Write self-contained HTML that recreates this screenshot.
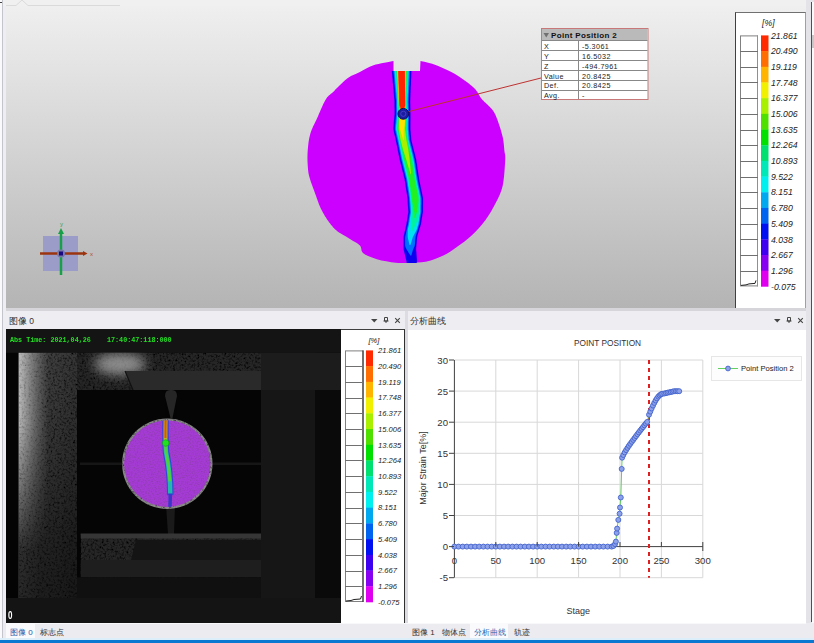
<!DOCTYPE html>
<html><head><meta charset="utf-8">
<style>
*{margin:0;padding:0;box-sizing:border-box}
html,body{width:814px;height:643px;overflow:hidden;background:#eeeef2;font-family:"Liberation Sans",sans-serif}
.a{position:absolute}
#top{left:6px;top:6px;width:800px;height:302px;background:linear-gradient(#efefef,#d2d2d2 50%,#b4b4b4)}
.hdr{font-size:8.5px;color:#333}
.tab{font-size:8px;color:#333;top:627px}
</style></head><body>
<!-- left edge -->
<div class="a" style="left:0;top:0;width:2px;height:643px;background:#fafafc"></div>
<div class="a" style="left:2px;top:0;width:1px;height:643px;background:#c4c4cc"></div>
<!-- top 3D view -->
<div class="a" style="left:3px;top:0;width:803px;height:6px;background:#f0f0f0"></div>
<div id="top" class="a"></div>
<svg class="a" style="left:0;top:0" width="120" height="10"><path d="M6,5.5 L16,5.5 L22,0 L28,5.5 L120,5.5" fill="none" stroke="#dadada" stroke-width="1"/><rect x="0" y="2" width="2" height="1" fill="#444"/></svg>
<!-- right edge -->
<div class="a" style="left:806px;top:0;width:8px;height:643px;background:#e4e4e8"></div>
<div class="a" style="left:811px;top:2px;width:1px;height:620px;background:#505050"></div>
<div class="a" style="left:812px;top:2px;width:2px;height:637px;background:#fafafa"></div>
<div class="a" style="left:812px;top:35px;width:2px;height:13px;background:#c8c8c8"></div>

<!-- 3D view content svg -->
<svg class="a" style="left:0;top:0" width="814" height="310">
  <defs><filter id="cb" x="-20%" y="-5%" width="140%" height="110%"><feGaussianBlur stdDeviation="0.7"/></filter></defs>
  <!-- circle -->
  <path fill="#cc00ff" d="M393.5,71 L393.5,61 C390.2,61.7 379.2,63.4 373.6,65.3 C368.0,67.1 364.2,70.0 359.9,72.1 C355.6,74.2 352.2,75.0 347.9,78.1 C343.6,81.2 337.9,87.3 334.2,90.9 C330.5,94.5 328.5,94.9 325.7,99.5 C322.9,104.1 319.7,112.6 317.1,118.3 C314.5,124.0 311.9,128.3 310.3,133.7 C308.7,139.1 308.1,145.6 307.7,150.8 C307.3,156.0 307.4,160.6 307.7,165 C308.0,169.4 308.1,172.2 309.4,177.1 C310.7,182.0 313.3,188.5 315.4,194.2 C317.5,199.9 319.1,205.6 322.2,211.3 C325.3,217.0 329.6,223.8 334.2,228.4 C338.8,233.0 345.3,235.8 349.6,238.7 C353.9,241.5 357.6,243.1 359.9,245.5 C362.2,247.9 360.4,250.9 363.3,253.2 C366.2,255.5 371.6,257.6 377,259.2 C382.4,260.8 390.3,262.1 395.8,262.7 C401.3,263.3 405.0,262.8 410,262.7 C415.0,262.6 420.2,262.9 425.7,261.8 C431.2,260.7 437.7,258.2 442.8,255.8 C447.9,253.4 451.6,250.7 456.5,247.3 C461.4,243.9 467.1,239.9 471.9,235.3 C476.7,230.7 481.5,225.3 485.5,219.9 C489.5,214.5 492.9,208.5 495.8,202.8 C498.7,197.1 501.1,192.8 502.7,185.7 C504.3,178.6 504.9,165.8 505.2,160 C505.5,154.2 504.8,154.6 504.4,150.8 C504.0,147.0 503.8,142.2 502.7,137.1 C501.6,132.0 499.2,124.6 497.5,120 C495.8,115.4 495.0,113.1 492.4,109.7 C489.8,106.3 485.0,102.9 482.1,99.5 C479.2,96.1 478.2,92.3 475.3,89.2 C472.4,86.1 469.0,83.6 465,80.7 C461.0,77.8 456.4,74.8 451.3,72.1 C446.2,69.4 439.3,66.2 434.2,64.4 C429.1,62.6 422.8,61.6 420.5,61 L420,71 Z"/>
  <g filter="url(#cb)"><path fill="#1000f0" d="M391.8,71.0 L391.9,72.5 L392.1,74.0 L392.2,75.5 L392.3,77.0 L392.5,78.5 L392.6,80.0 L392.7,81.5 L392.8,83.0 L393.0,84.5 L393.1,86.0 L393.2,87.5 L393.4,89.0 L393.5,90.5 L393.6,92.0 L393.8,93.5 L393.9,95.0 L394.0,96.5 L394.1,98.0 L394.3,99.5 L394.4,101.0 L394.4,102.5 L394.4,104.0 L394.4,105.5 L394.4,107.0 L394.5,108.5 L394.5,110.0 L394.5,111.5 L394.5,113.0 L394.5,114.5 L394.3,116.0 L394.2,117.5 L394.1,119.0 L393.9,120.5 L393.8,122.0 L393.7,123.5 L393.5,125.0 L393.4,126.5 L393.3,128.0 L393.3,129.5 L393.7,131.0 L394.0,132.5 L394.3,134.0 L394.7,135.5 L395.0,137.0 L395.4,138.5 L395.7,140.0 L396.0,141.5 L396.3,143.0 L396.6,144.5 L396.9,146.0 L397.2,147.5 L397.5,149.0 L397.8,150.5 L398.1,152.0 L398.4,153.5 L398.7,155.0 L399.0,156.5 L399.3,158.0 L399.6,159.5 L400.0,161.0 L400.4,162.5 L400.7,164.0 L401.1,165.5 L401.5,167.0 L401.9,168.5 L402.2,170.0 L402.6,171.5 L403.0,173.0 L403.4,174.5 L403.7,176.0 L404.1,177.5 L404.5,179.0 L404.7,180.5 L405.0,182.0 L405.2,183.5 L405.4,185.0 L405.6,186.5 L405.9,188.0 L406.1,189.5 L406.3,191.0 L406.6,192.5 L406.8,194.0 L407.0,195.5 L407.2,197.0 L407.4,198.5 L407.5,200.0 L407.6,201.5 L407.7,203.0 L407.8,204.5 L407.9,206.0 L408.0,207.5 L408.1,209.0 L408.2,210.5 L408.3,212.0 L408.1,213.5 L407.8,215.0 L407.6,216.5 L407.3,218.0 L407.1,219.5 L406.9,221.0 L406.6,222.5 L406.4,224.0 L406.1,225.5 L405.7,227.0 L405.4,228.5 L405.1,230.0 L404.7,231.5 L404.4,233.0 L404.1,234.5 L403.7,236.0 L403.5,237.5 L403.5,239.0 L403.5,240.5 L403.5,242.0 L403.5,243.5 L403.5,245.0 L403.5,246.5 L403.5,248.0 L403.6,249.5 L404.0,251.0 L404.3,252.5 L404.7,254.0 L405.1,255.5 L405.4,257.0 L405.8,258.5 L406.2,260.0 L406.5,261.5 L406.7,263.0 L416.7,263.0 L416.9,261.5 L416.9,260.0 L416.8,258.5 L416.7,257.0 L416.6,255.5 L416.5,254.0 L416.4,252.5 L416.2,251.0 L416.1,249.5 L416.2,248.0 L416.3,246.5 L416.4,245.0 L416.6,243.5 L416.7,242.0 L416.8,240.5 L416.9,239.0 L417.1,237.5 L417.4,236.0 L417.8,234.5 L418.3,233.0 L418.8,231.5 L419.2,230.0 L419.6,228.5 L420.1,227.0 L420.6,225.5 L421.0,224.0 L421.2,222.5 L421.5,221.0 L421.7,219.5 L421.9,218.0 L422.2,216.5 L422.4,215.0 L422.7,213.5 L422.9,212.0 L422.9,210.5 L422.9,209.0 L422.9,207.5 L422.9,206.0 L423.0,204.5 L423.0,203.0 L423.0,201.5 L423.0,200.0 L423.0,198.5 L422.8,197.0 L422.5,195.5 L422.2,194.0 L421.9,192.5 L421.6,191.0 L421.3,189.5 L420.9,188.0 L420.6,186.5 L420.3,185.0 L420.0,183.5 L419.7,182.0 L419.4,180.5 L419.1,179.0 L418.9,177.5 L418.7,176.0 L418.4,174.5 L418.2,173.0 L418.0,171.5 L417.8,170.0 L417.5,168.5 L417.3,167.0 L417.1,165.5 L416.9,164.0 L416.6,162.5 L416.4,161.0 L416.2,159.5 L415.8,158.0 L415.4,156.5 L415.1,155.0 L414.7,153.5 L414.3,152.0 L413.9,150.5 L413.6,149.0 L413.2,147.5 L412.8,146.0 L412.4,144.5 L412.1,143.0 L411.7,141.5 L411.3,140.0 L411.2,138.5 L411.1,137.0 L410.9,135.5 L410.8,134.0 L410.7,132.5 L410.6,131.0 L410.4,129.5 L410.4,128.0 L410.4,126.5 L410.4,125.0 L410.4,123.5 L410.4,122.0 L410.5,120.5 L410.5,119.0 L410.5,117.5 L410.5,116.0 L410.5,114.5 L410.5,113.0 L410.4,111.5 L410.4,110.0 L410.4,108.5 L410.3,107.0 L410.3,105.5 L410.3,104.0 L410.2,102.5 L410.2,101.0 L410.3,99.5 L410.3,98.0 L410.4,96.5 L410.4,95.0 L410.5,93.5 L410.6,92.0 L410.6,90.5 L410.7,89.0 L410.7,87.5 L410.8,86.0 L410.9,84.5 L410.9,83.0 L411.0,81.5 L411.0,80.0 L411.1,78.5 L411.2,77.0 L411.2,75.5 L411.3,74.0 L411.3,72.5 L411.4,71.0Z"/><path fill="#0070ff" d="M393.4,71.0 L393.5,72.5 L393.7,74.0 L393.8,75.5 L393.9,77.0 L394.1,78.5 L394.2,80.0 L394.3,81.5 L394.4,83.0 L394.6,84.5 L394.7,86.0 L394.8,87.5 L395.0,89.0 L395.1,90.5 L395.2,92.0 L395.4,93.5 L395.5,95.0 L395.6,96.5 L395.7,98.0 L395.9,99.5 L396.0,101.0 L396.0,102.5 L396.0,104.0 L396.0,105.5 L396.0,107.0 L396.1,108.5 L396.1,110.0 L396.1,111.5 L396.1,113.0 L396.1,114.5 L395.9,116.0 L395.8,117.5 L395.7,119.0 L395.5,120.5 L395.4,122.0 L395.3,123.5 L395.1,125.0 L395.0,126.5 L394.9,128.0 L394.9,129.5 L395.3,131.0 L395.6,132.5 L395.9,134.0 L396.3,135.5 L396.6,137.0 L397.0,138.5 L397.3,140.0 L397.6,141.5 L397.9,143.0 L398.2,144.5 L398.5,146.0 L398.8,147.5 L399.1,149.0 L399.4,150.5 L399.7,152.0 L400.0,153.5 L400.3,155.0 L400.6,156.5 L400.9,158.0 L401.2,159.5 L401.6,161.0 L402.0,162.5 L402.3,164.0 L402.7,165.5 L403.1,167.0 L403.5,168.5 L403.8,170.0 L404.2,171.5 L404.6,173.0 L405.0,174.5 L405.3,176.0 L405.7,177.5 L406.1,179.0 L406.3,180.5 L406.6,182.0 L406.8,183.5 L407.0,185.0 L407.2,186.5 L407.5,188.0 L407.7,189.5 L407.9,191.0 L408.2,192.5 L408.4,194.0 L408.6,195.5 L408.8,197.0 L409.0,198.5 L409.1,200.0 L409.2,201.5 L409.3,203.0 L409.4,204.5 L409.5,206.0 L409.6,207.5 L409.7,209.0 L409.8,210.5 L409.9,212.0 L409.7,213.5 L409.4,215.0 L409.2,216.5 L408.9,218.0 L408.7,219.5 L408.5,221.0 L408.2,222.5 L408.0,224.0 L407.7,225.5 L407.3,227.0 L407.0,228.5 L406.7,230.0 L406.3,231.5 L406.0,233.0 L405.7,234.5 L405.3,236.0 L405.1,237.5 L405.1,239.0 L405.1,240.5 L405.1,242.0 L405.1,243.5 L405.1,245.0 L405.3,246.5 L405.9,248.0 L406.7,249.5 L407.6,251.0 L408.5,252.5 L409.5,254.0 L410.4,255.5 L411.3,255.5 L411.7,254.0 L412.2,252.5 L412.6,251.0 L413.1,249.5 L413.7,248.0 L414.5,246.5 L414.8,245.0 L415.0,243.5 L415.1,242.0 L415.2,240.5 L415.3,239.0 L415.5,237.5 L415.8,236.0 L416.2,234.5 L416.7,233.0 L417.1,231.5 L417.6,230.0 L418.1,228.5 L418.5,227.0 L418.9,225.5 L419.4,224.0 L419.6,222.5 L419.9,221.0 L420.1,219.5 L420.3,218.0 L420.6,216.5 L420.8,215.0 L421.1,213.5 L421.3,212.0 L421.3,210.5 L421.3,209.0 L421.3,207.5 L421.3,206.0 L421.4,204.5 L421.4,203.0 L421.4,201.5 L421.4,200.0 L421.4,198.5 L421.2,197.0 L420.9,195.5 L420.6,194.0 L420.3,192.5 L420.0,191.0 L419.7,189.5 L419.3,188.0 L419.0,186.5 L418.7,185.0 L418.4,183.5 L418.1,182.0 L417.8,180.5 L417.5,179.0 L417.3,177.5 L417.1,176.0 L416.8,174.5 L416.6,173.0 L416.4,171.5 L416.2,170.0 L415.9,168.5 L415.7,167.0 L415.5,165.5 L415.3,164.0 L415.0,162.5 L414.8,161.0 L414.6,159.5 L414.2,158.0 L413.8,156.5 L413.5,155.0 L413.1,153.5 L412.7,152.0 L412.3,150.5 L412.0,149.0 L411.6,147.5 L411.2,146.0 L410.8,144.5 L410.5,143.0 L410.1,141.5 L409.7,140.0 L409.6,138.5 L409.5,137.0 L409.3,135.5 L409.2,134.0 L409.1,132.5 L409.0,131.0 L408.8,129.5 L408.8,128.0 L408.8,126.5 L408.8,125.0 L408.8,123.5 L408.8,122.0 L408.9,120.5 L408.9,119.0 L408.9,117.5 L408.9,116.0 L408.9,114.5 L408.9,113.0 L408.8,111.5 L408.8,110.0 L408.8,108.5 L408.7,107.0 L408.7,105.5 L408.7,104.0 L408.6,102.5 L408.6,101.0 L408.7,99.5 L408.7,98.0 L408.8,96.5 L408.8,95.0 L408.9,93.5 L409.0,92.0 L409.0,90.5 L409.1,89.0 L409.1,87.5 L409.2,86.0 L409.3,84.5 L409.3,83.0 L409.4,81.5 L409.4,80.0 L409.5,78.5 L409.6,77.0 L409.6,75.5 L409.7,74.0 L409.7,72.5 L409.8,71.0Z"/><path fill="#00e0f0" d="M394.4,71.0 L394.5,72.5 L394.7,74.0 L394.8,75.5 L394.9,77.0 L395.1,78.5 L395.2,80.0 L395.3,81.5 L395.4,83.0 L395.6,84.5 L395.7,86.0 L395.8,87.5 L396.0,89.0 L396.1,90.5 L396.2,92.0 L396.4,93.5 L396.5,95.0 L396.6,96.5 L396.7,98.0 L396.9,99.5 L397.0,101.0 L397.0,102.5 L397.0,104.0 L397.0,105.5 L397.0,107.0 L397.1,108.5 L397.1,110.0 L397.1,111.5 L397.1,113.0 L397.1,114.5 L396.9,116.0 L396.8,117.5 L396.7,119.0 L396.5,120.5 L396.4,122.0 L396.3,123.5 L396.1,125.0 L396.0,126.5 L395.9,128.0 L395.9,129.5 L396.3,131.0 L396.6,132.5 L396.9,134.0 L397.3,135.5 L397.6,137.0 L398.0,138.5 L398.3,140.0 L398.6,141.5 L398.9,143.0 L399.2,144.5 L399.5,146.0 L399.8,147.5 L400.1,149.0 L400.4,150.5 L400.7,152.0 L401.0,153.5 L401.3,155.0 L401.6,156.5 L401.9,158.0 L402.2,159.5 L402.6,161.0 L403.0,162.5 L403.3,164.0 L403.7,165.5 L404.1,167.0 L404.5,168.5 L404.8,170.0 L405.2,171.5 L405.6,173.0 L406.0,174.5 L406.3,176.0 L406.7,177.5 L407.1,179.0 L407.3,180.5 L407.6,182.0 L407.8,183.5 L408.0,185.0 L408.2,186.5 L408.5,188.0 L408.7,189.5 L408.9,191.0 L409.2,192.5 L409.4,194.0 L409.6,195.5 L409.8,197.0 L410.0,198.5 L410.1,200.0 L410.2,201.5 L410.3,203.0 L410.4,204.5 L410.5,206.0 L410.6,207.5 L410.7,209.0 L410.8,210.5 L410.9,212.0 L410.7,213.5 L410.4,215.0 L410.2,216.5 L409.9,218.0 L409.7,219.5 L409.5,221.0 L409.2,222.5 L409.0,224.0 L408.7,225.5 L408.3,227.0 L408.0,228.5 L407.7,230.0 L407.7,231.5 L407.7,233.0 L407.7,234.5 L407.7,236.0 L407.8,237.5 L408.1,239.0 L408.5,240.5 L408.8,242.0 L409.2,243.5 L409.5,245.0 L410.4,245.0 L410.9,243.5 L411.4,242.0 L411.8,240.5 L412.3,239.0 L412.7,237.5 L413.4,236.0 L414.2,234.5 L415.0,233.0 L415.8,231.5 L416.6,230.0 L417.1,228.5 L417.5,227.0 L417.9,225.5 L418.4,224.0 L418.6,222.5 L418.9,221.0 L419.1,219.5 L419.3,218.0 L419.6,216.5 L419.8,215.0 L420.1,213.5 L420.3,212.0 L420.3,210.5 L420.3,209.0 L420.3,207.5 L420.3,206.0 L420.4,204.5 L420.4,203.0 L420.4,201.5 L420.4,200.0 L420.4,198.5 L420.2,197.0 L419.9,195.5 L419.6,194.0 L419.3,192.5 L419.0,191.0 L418.7,189.5 L418.3,188.0 L418.0,186.5 L417.7,185.0 L417.4,183.5 L417.1,182.0 L416.8,180.5 L416.5,179.0 L416.3,177.5 L416.1,176.0 L415.8,174.5 L415.6,173.0 L415.4,171.5 L415.2,170.0 L414.9,168.5 L414.7,167.0 L414.5,165.5 L414.3,164.0 L414.0,162.5 L413.8,161.0 L413.6,159.5 L413.2,158.0 L412.8,156.5 L412.5,155.0 L412.1,153.5 L411.7,152.0 L411.3,150.5 L411.0,149.0 L410.6,147.5 L410.2,146.0 L409.8,144.5 L409.5,143.0 L409.1,141.5 L408.7,140.0 L408.6,138.5 L408.5,137.0 L408.3,135.5 L408.2,134.0 L408.1,132.5 L408.0,131.0 L407.8,129.5 L407.8,128.0 L407.8,126.5 L407.8,125.0 L407.8,123.5 L407.8,122.0 L407.9,120.5 L407.9,119.0 L407.9,117.5 L407.9,116.0 L407.9,114.5 L407.9,113.0 L407.8,111.5 L407.8,110.0 L407.8,108.5 L407.7,107.0 L407.7,105.5 L407.7,104.0 L407.6,102.5 L407.6,101.0 L407.7,99.5 L407.7,98.0 L407.8,96.5 L407.8,95.0 L407.9,93.5 L408.0,92.0 L408.0,90.5 L408.1,89.0 L408.1,87.5 L408.2,86.0 L408.3,84.5 L408.3,83.0 L408.4,81.5 L408.4,80.0 L408.5,78.5 L408.6,77.0 L408.6,75.5 L408.7,74.0 L408.7,72.5 L408.8,71.0Z"/><path fill="#00f0a0" d="M395.4,71.0 L395.5,72.5 L395.7,74.0 L395.8,75.5 L395.9,77.0 L396.1,78.5 L396.2,80.0 L396.3,81.5 L396.4,83.0 L396.6,84.5 L396.7,86.0 L396.8,87.5 L397.0,89.0 L397.1,90.5 L397.2,92.0 L397.4,93.5 L397.5,95.0 L397.6,96.5 L397.7,98.0 L397.9,99.5 L398.0,101.0 L398.0,102.5 L398.0,104.0 L398.0,105.5 L398.0,107.0 L398.1,108.5 L398.1,110.0 L398.1,111.5 L398.1,113.0 L398.1,114.5 L397.9,116.0 L397.8,117.5 L397.7,119.0 L397.5,120.5 L397.4,122.0 L397.3,123.5 L397.1,125.0 L397.0,126.5 L396.9,128.0 L396.9,129.5 L397.3,131.0 L397.6,132.5 L397.9,134.0 L398.3,135.5 L398.6,137.0 L399.0,138.5 L399.3,140.0 L399.6,141.5 L399.9,143.0 L400.2,144.5 L400.5,146.0 L400.8,147.5 L401.1,149.0 L401.4,150.5 L401.7,152.0 L402.0,153.5 L402.3,155.0 L402.6,156.5 L402.9,158.0 L403.2,159.5 L403.6,161.0 L404.0,162.5 L404.3,164.0 L404.7,165.5 L405.1,167.0 L405.5,168.5 L405.8,170.0 L406.2,171.5 L406.6,173.0 L407.0,174.5 L407.3,176.0 L407.7,177.5 L408.1,179.0 L408.3,180.5 L408.6,182.0 L408.8,183.5 L409.0,185.0 L409.2,186.5 L409.5,188.0 L409.7,189.5 L409.9,191.0 L410.2,192.5 L410.4,194.0 L410.6,195.5 L410.8,197.0 L411.0,198.5 L411.1,200.0 L411.2,201.5 L411.3,203.0 L411.4,204.5 L411.5,206.0 L411.6,207.5 L411.7,209.0 L411.8,210.5 L411.9,212.0 L411.7,213.5 L411.4,215.0 L411.2,216.5 L410.9,218.0 L411.1,219.5 L411.2,221.0 L411.4,222.5 L411.5,224.0 L411.5,225.5 L411.5,227.0 L411.4,228.5 L411.4,230.0 L411.4,231.5 L412.1,231.5 L412.8,230.0 L413.6,228.5 L414.4,227.0 L415.1,225.5 L415.9,224.0 L416.5,222.5 L417.1,221.0 L417.7,219.5 L418.3,218.0 L418.6,216.5 L418.8,215.0 L419.1,213.5 L419.3,212.0 L419.3,210.5 L419.3,209.0 L419.3,207.5 L419.3,206.0 L419.4,204.5 L419.4,203.0 L419.4,201.5 L419.4,200.0 L419.4,198.5 L419.2,197.0 L418.9,195.5 L418.6,194.0 L418.3,192.5 L418.0,191.0 L417.7,189.5 L417.3,188.0 L417.0,186.5 L416.7,185.0 L416.4,183.5 L416.1,182.0 L415.8,180.5 L415.5,179.0 L415.3,177.5 L415.1,176.0 L414.8,174.5 L414.6,173.0 L414.4,171.5 L414.2,170.0 L413.9,168.5 L413.7,167.0 L413.5,165.5 L413.3,164.0 L413.0,162.5 L412.8,161.0 L412.6,159.5 L412.2,158.0 L411.8,156.5 L411.5,155.0 L411.1,153.5 L410.7,152.0 L410.3,150.5 L410.0,149.0 L409.6,147.5 L409.2,146.0 L408.8,144.5 L408.5,143.0 L408.1,141.5 L407.7,140.0 L407.6,138.5 L407.5,137.0 L407.3,135.5 L407.2,134.0 L407.1,132.5 L407.0,131.0 L406.8,129.5 L406.8,128.0 L406.8,126.5 L406.8,125.0 L406.8,123.5 L406.8,122.0 L406.9,120.5 L406.9,119.0 L406.9,117.5 L406.9,116.0 L406.9,114.5 L406.9,113.0 L406.8,111.5 L406.8,110.0 L406.8,108.5 L406.7,107.0 L406.7,105.5 L406.7,104.0 L406.6,102.5 L406.6,101.0 L406.7,99.5 L406.7,98.0 L406.8,96.5 L406.8,95.0 L406.9,93.5 L407.0,92.0 L407.0,90.5 L407.1,89.0 L407.1,87.5 L407.2,86.0 L407.3,84.5 L407.3,83.0 L407.4,81.5 L407.4,80.0 L407.5,78.5 L407.6,77.0 L407.6,75.5 L407.7,74.0 L407.7,72.5 L407.8,71.0Z"/><path fill="#20f020" d="M396.4,71.0 L396.5,72.5 L396.7,74.0 L396.8,75.5 L396.9,77.0 L397.1,78.5 L397.2,80.0 L397.3,81.5 L397.4,83.0 L397.6,84.5 L397.7,86.0 L397.8,87.5 L398.0,89.0 L398.1,90.5 L398.2,92.0 L398.4,93.5 L398.5,95.0 L398.6,96.5 L398.7,98.0 L398.9,99.5 L399.0,101.0 L399.0,102.5 L399.0,104.0 L399.0,105.5 L399.0,107.0 L399.1,108.5 L399.1,110.0 L399.1,111.5 L399.1,113.0 L399.1,114.5 L398.9,116.0 L398.8,117.5 L398.7,119.0 L398.5,120.5 L398.4,122.0 L398.3,123.5 L398.1,125.0 L398.0,126.5 L397.9,128.0 L397.9,129.5 L398.3,131.0 L398.6,132.5 L398.9,134.0 L399.3,135.5 L399.6,137.0 L400.0,138.5 L400.3,140.0 L400.6,141.5 L400.9,143.0 L401.2,144.5 L401.5,146.0 L401.8,147.5 L402.1,149.0 L402.4,150.5 L402.7,152.0 L403.0,153.5 L403.3,155.0 L403.6,156.5 L403.9,158.0 L404.2,159.5 L404.6,161.0 L405.0,162.5 L405.3,164.0 L405.7,165.5 L406.1,167.0 L406.5,168.5 L406.8,170.0 L407.2,171.5 L407.6,173.0 L408.0,174.5 L408.3,176.0 L408.7,177.5 L409.1,179.0 L409.3,180.5 L409.6,182.0 L409.8,183.5 L410.0,185.0 L410.2,186.5 L410.5,188.0 L410.7,189.5 L410.9,191.0 L411.2,192.5 L411.4,194.0 L411.6,195.5 L411.8,197.0 L412.0,198.5 L412.1,200.0 L412.2,201.5 L412.5,203.0 L412.8,204.5 L413.1,206.0 L413.4,207.5 L413.7,209.0 L414.0,210.5 L414.3,212.0 L414.4,213.5 L414.4,215.0 L414.4,216.5 L414.4,218.0 L414.8,218.0 L415.4,216.5 L415.9,215.0 L416.4,213.5 L416.9,212.0 L417.1,210.5 L417.3,209.0 L417.5,207.5 L417.8,206.0 L418.0,204.5 L418.2,203.0 L418.4,201.5 L418.4,200.0 L418.4,198.5 L418.2,197.0 L417.9,195.5 L417.6,194.0 L417.3,192.5 L417.0,191.0 L416.7,189.5 L416.3,188.0 L416.0,186.5 L415.7,185.0 L415.4,183.5 L415.1,182.0 L414.8,180.5 L414.5,179.0 L414.3,177.5 L414.1,176.0 L413.8,174.5 L413.6,173.0 L413.4,171.5 L413.2,170.0 L412.9,168.5 L412.7,167.0 L412.5,165.5 L412.3,164.0 L412.0,162.5 L411.8,161.0 L411.6,159.5 L411.2,158.0 L410.8,156.5 L410.5,155.0 L410.1,153.5 L409.7,152.0 L409.3,150.5 L409.0,149.0 L408.6,147.5 L408.2,146.0 L407.8,144.5 L407.5,143.0 L407.1,141.5 L406.7,140.0 L406.6,138.5 L406.5,137.0 L406.3,135.5 L406.2,134.0 L406.1,132.5 L406.0,131.0 L405.8,129.5 L405.8,128.0 L405.8,126.5 L405.8,125.0 L405.8,123.5 L405.8,122.0 L405.9,120.5 L405.9,119.0 L405.9,117.5 L405.9,116.0 L405.9,114.5 L405.9,113.0 L405.8,111.5 L405.8,110.0 L405.8,108.5 L405.7,107.0 L405.7,105.5 L405.7,104.0 L405.6,102.5 L405.6,101.0 L405.7,99.5 L405.7,98.0 L405.8,96.5 L405.8,95.0 L405.9,93.5 L406.0,92.0 L406.0,90.5 L406.1,89.0 L406.1,87.5 L406.2,86.0 L406.3,84.5 L406.3,83.0 L406.4,81.5 L406.4,80.0 L406.5,78.5 L406.6,77.0 L406.6,75.5 L406.7,74.0 L406.7,72.5 L406.8,71.0Z"/><path fill="#a8f000" d="M397.1,71.0 L397.2,72.5 L397.3,74.0 L397.3,75.5 L397.4,77.0 L397.5,78.5 L397.6,80.0 L397.6,81.5 L397.7,83.0 L397.8,84.5 L397.9,86.0 L397.9,87.5 L398.0,89.0 L398.1,90.5 L398.2,92.0 L398.2,93.5 L398.3,95.0 L398.4,96.5 L398.5,98.0 L398.5,99.5 L398.6,101.0 L398.7,102.5 L398.7,104.0 L398.8,105.5 L398.9,107.0 L398.9,108.5 L399.0,110.0 L399.0,111.5 L399.1,113.0 L399.1,114.5 L399.0,116.0 L399.0,117.5 L398.9,119.0 L398.9,120.5 L398.8,122.0 L398.8,123.5 L398.7,125.0 L398.7,126.5 L398.6,128.0 L398.7,129.5 L398.9,131.0 L399.2,132.5 L399.5,134.0 L399.8,135.5 L400.0,137.0 L400.3,138.5 L400.6,140.0 L401.0,141.5 L401.4,143.0 L401.8,144.5 L402.1,146.0 L402.5,147.5 L402.9,149.0 L403.3,150.5 L403.8,152.0 L404.3,153.5 L404.8,155.0 L405.2,156.5 L405.7,158.0 L406.2,159.5 L406.7,161.0 L407.1,162.5 L407.5,164.0 L408.0,165.5 L408.4,167.0 L408.9,168.5 L409.3,170.0 L409.8,171.5 L410.2,173.0 L410.7,174.5 L411.1,174.5 L411.0,173.0 L410.8,171.5 L410.7,170.0 L410.5,168.5 L410.4,167.0 L410.2,165.5 L410.1,164.0 L409.9,162.5 L409.7,161.0 L409.6,159.5 L409.4,158.0 L409.2,156.5 L409.0,155.0 L408.8,153.5 L408.6,152.0 L408.4,150.5 L408.2,149.0 L407.9,147.5 L407.6,146.0 L407.3,144.5 L407.0,143.0 L406.7,141.5 L406.4,140.0 L406.2,138.5 L406.0,137.0 L405.8,135.5 L405.7,134.0 L405.5,132.5 L405.3,131.0 L405.1,129.5 L405.1,128.0 L405.2,126.5 L405.3,125.0 L405.3,123.5 L405.4,122.0 L405.5,120.5 L405.6,119.0 L405.7,117.5 L405.8,116.0 L405.9,114.5 L405.9,113.0 L405.9,111.5 L405.9,110.0 L405.9,108.5 L405.9,107.0 L405.9,105.5 L406.0,104.0 L406.0,102.5 L406.0,101.0 L406.0,99.5 L406.0,98.0 L406.0,96.5 L406.0,95.0 L406.0,93.5 L406.0,92.0 L406.0,90.5 L406.0,89.0 L406.0,87.5 L406.0,86.0 L406.1,84.5 L406.1,83.0 L406.1,81.5 L406.1,80.0 L406.1,78.5 L406.1,77.0 L406.1,75.5 L406.1,74.0 L406.1,72.5 L406.1,71.0Z"/><path fill="#ffe000" d="M397.6,71.0 L397.7,72.5 L397.7,74.0 L397.8,75.5 L397.9,77.0 L397.9,78.5 L398.0,80.0 L398.0,81.5 L398.1,83.0 L398.2,84.5 L398.2,86.0 L398.3,87.5 L398.4,89.0 L398.4,90.5 L398.5,92.0 L398.6,93.5 L398.6,95.0 L398.7,96.5 L398.7,98.0 L398.8,99.5 L398.9,101.0 L398.9,102.5 L399.0,104.0 L399.0,105.5 L399.1,107.0 L399.1,108.5 L399.2,110.0 L399.3,111.5 L399.4,113.0 L399.4,114.5 L399.4,116.0 L399.4,117.5 L399.4,119.0 L399.4,120.5 L399.4,122.0 L399.4,123.5 L399.4,125.0 L399.6,126.5 L399.7,128.0 L400.0,129.5 L400.5,131.0 L400.9,132.5 L401.4,134.0 L401.9,135.5 L402.4,137.0 L402.8,138.5 L403.3,140.0 L403.7,140.0 L403.7,138.5 L403.7,137.0 L403.7,135.5 L403.7,134.0 L403.7,132.5 L403.7,131.0 L403.8,129.5 L404.0,128.0 L404.3,126.5 L404.6,125.0 L404.7,123.5 L404.9,122.0 L405.0,120.5 L405.1,119.0 L405.2,117.5 L405.4,116.0 L405.5,114.5 L405.6,113.0 L405.6,111.5 L405.7,110.0 L405.7,108.5 L405.7,107.0 L405.7,105.5 L405.7,104.0 L405.7,102.5 L405.7,101.0 L405.7,99.5 L405.7,98.0 L405.7,96.5 L405.7,95.0 L405.7,93.5 L405.7,92.0 L405.7,90.5 L405.7,89.0 L405.7,87.5 L405.7,86.0 L405.7,84.5 L405.7,83.0 L405.6,81.5 L405.6,80.0 L405.6,78.5 L405.6,77.0 L405.6,75.5 L405.6,74.0 L405.6,72.5 L405.6,71.0Z"/><path fill="#ff7000" d="M397.9,71.0 L398.0,72.5 L398.0,74.0 L398.1,75.5 L398.1,77.0 L398.2,78.5 L398.2,80.0 L398.3,81.5 L398.3,83.0 L398.4,84.5 L398.5,86.0 L398.5,87.5 L398.6,89.0 L398.6,90.5 L398.7,92.0 L398.7,93.5 L398.8,95.0 L398.8,96.5 L398.9,98.0 L399.0,99.5 L399.0,101.0 L399.0,102.5 L399.1,104.0 L399.1,105.5 L399.2,107.0 L399.5,108.5 L400.4,110.0 L401.4,111.5 L402.3,113.0 L402.7,113.0 L403.6,111.5 L404.4,110.0 L405.3,108.5 L405.6,107.0 L405.6,105.5 L405.6,104.0 L405.6,102.5 L405.6,101.0 L405.6,99.5 L405.6,98.0 L405.6,96.5 L405.5,95.0 L405.5,93.5 L405.5,92.0 L405.5,90.5 L405.5,89.0 L405.5,87.5 L405.4,86.0 L405.4,84.5 L405.4,83.0 L405.4,81.5 L405.4,80.0 L405.4,78.5 L405.4,77.0 L405.3,75.5 L405.3,74.0 L405.3,72.5 L405.3,71.0Z"/><path fill="#ff2400" d="M398.4,71.0 L398.5,72.5 L398.5,74.0 L398.6,75.5 L398.6,77.0 L398.7,78.5 L398.7,80.0 L398.8,81.5 L398.8,83.0 L398.9,84.5 L398.9,86.0 L399.0,87.5 L399.0,89.0 L399.1,90.5 L399.1,92.0 L399.2,93.5 L399.2,95.0 L399.3,96.5 L399.3,98.0 L399.4,99.5 L399.4,101.0 L399.5,102.5 L399.5,104.0 L399.6,105.5 L400.2,107.0 L401.2,108.5 L402.2,110.0 L402.6,110.0 L403.6,108.5 L404.5,107.0 L405.2,105.5 L405.2,104.0 L405.2,102.5 L405.2,101.0 L405.1,99.5 L405.1,98.0 L405.1,96.5 L405.1,95.0 L405.1,93.5 L405.1,92.0 L405.0,90.5 L405.0,89.0 L405.0,87.5 L405.0,86.0 L405.0,84.5 L404.9,83.0 L404.9,81.5 L404.9,80.0 L404.9,78.5 L404.9,77.0 L404.9,75.5 L404.8,74.0 L404.8,72.5 L404.8,71.0Z"/></g>
  <line x1="403" y1="113" x2="541" y2="78" stroke="#c03030" stroke-width="1"/>
  <circle cx="403.3" cy="113.8" r="5.4" fill="#1c1ca0" stroke="#0c0c60" stroke-width="1"/><circle cx="403.3" cy="113.8" r="2.6" fill="none" stroke="#4848d0" stroke-width="0.8"/>
  <!-- axis indicator -->
  <rect x="43" y="236" width="35" height="35" fill="#9c9cc8"/>
  <line x1="61" y1="275" x2="61" y2="232" stroke="#18a048" stroke-width="2.5"/>
  <path d="M58,234 L61,228 L64,234Z" fill="#18a048"/>
  <line x1="40" y1="253.5" x2="84" y2="253.5" stroke="#9c3410" stroke-width="2.5"/>
  <path d="M83,251 L87.5,253.5 L83,256Z" fill="#9c3410"/>
  <circle cx="61" cy="253.5" r="4" fill="#7878a8"/>
  <rect x="59" y="251.5" width="4" height="4" fill="#1a0880"/>
  <text x="60" y="225.5" font-size="6" fill="#30a060" font-family="Liberation Sans">y</text>
  <text x="90" y="255.5" font-size="6" fill="#b05030" font-family="Liberation Sans">x</text>
</svg>

<!-- point table -->
<svg class="a" style="left:0;top:0" width="814" height="120">
<rect x="541.5" y="28.5" width="106.5" height="71" fill="#fff" stroke="#c87878" stroke-width="1"/>
<rect x="542" y="29" width="105.5" height="11.3" fill="#bababa"/>
<path d="M543.5,33 L549,33 L546.25,37.5Z" fill="#707070"/>
<text x="551" y="38.2" font-family="Liberation Sans" font-weight="bold" font-size="8" fill="#111" letter-spacing="0.35">Point Position 2</text>
<g stroke="#888" stroke-width="1"><line x1="542" y1="40.5" x2="647.5" y2="40.5"/><line x1="542" y1="50.5" x2="647.5" y2="50.5"/><line x1="542" y1="60.5" x2="647.5" y2="60.5"/><line x1="542" y1="70.5" x2="647.5" y2="70.5"/><line x1="542" y1="80.5" x2="647.5" y2="80.5"/><line x1="542" y1="90.5" x2="647.5" y2="90.5"/><line x1="578.5" y1="40.5" x2="578.5" y2="99"/></g>
<g font-family="Liberation Sans" font-size="7.2" fill="#222" letter-spacing="0.4"><text x="544" y="48.5">X</text><text x="582" y="48.5">-5.3061</text><text x="544" y="58.6">Y</text><text x="582" y="58.6">16.5032</text><text x="544" y="68.7">Z</text><text x="582" y="68.7">-494.7961</text><text x="544" y="78.6">Value</text><text x="582" y="78.6">20.8425</text><text x="544" y="88.4">Def.</text><text x="582" y="88.4">20.8425</text><text x="544" y="98.2">Avg.</text><text x="582" y="98.2">-</text></g>
</svg>

<!-- top legend -->
<div class="a" style="left:735px;top:12px;width:71px;height:297px;background:#fff;border-left:1px solid #404040;border-top:1px solid #707070;border-right:1px solid #a0a0a0"></div>
<svg class="a" style="left:0;top:0" width="814" height="310"><rect x="740.5" y="35.9" width="17" height="249.99999999999997" fill="#fff" stroke="#808080" stroke-width="1"/><line x1="757.5" y1="35.4" x2="757.5" y2="286.4" stroke="#909090" stroke-width="1"/><line x1="740" y1="51.5" x2="758" y2="51.5" stroke="#707070" stroke-width="1"/><line x1="740" y1="67.5" x2="758" y2="67.5" stroke="#707070" stroke-width="1"/><line x1="740" y1="82.5" x2="758" y2="82.5" stroke="#707070" stroke-width="1"/><line x1="740" y1="98.5" x2="758" y2="98.5" stroke="#707070" stroke-width="1"/><line x1="740" y1="114.5" x2="758" y2="114.5" stroke="#707070" stroke-width="1"/><line x1="740" y1="130.5" x2="758" y2="130.5" stroke="#707070" stroke-width="1"/><line x1="740" y1="145.5" x2="758" y2="145.5" stroke="#707070" stroke-width="1"/><line x1="740" y1="161.5" x2="758" y2="161.5" stroke="#707070" stroke-width="1"/><line x1="740" y1="177.5" x2="758" y2="177.5" stroke="#707070" stroke-width="1"/><line x1="740" y1="192.5" x2="758" y2="192.5" stroke="#707070" stroke-width="1"/><line x1="740" y1="208.5" x2="758" y2="208.5" stroke="#707070" stroke-width="1"/><line x1="740" y1="224.5" x2="758" y2="224.5" stroke="#707070" stroke-width="1"/><line x1="740" y1="239.5" x2="758" y2="239.5" stroke="#707070" stroke-width="1"/><line x1="740" y1="255.5" x2="758" y2="255.5" stroke="#707070" stroke-width="1"/><line x1="740" y1="271.5" x2="758" y2="271.5" stroke="#707070" stroke-width="1"/><path d="M741,285.4 L746,284.9 L749,283.9 L755,283.4 L756,280.4" fill="none" stroke="#202020" stroke-width="1"/><rect x="761" y="35.40" width="7.5" height="15.99" fill="#ff2a00"/><rect x="761" y="51.09" width="7.5" height="15.99" fill="#ff6e00"/><rect x="761" y="66.77" width="7.5" height="15.99" fill="#ffb400"/><rect x="761" y="82.46" width="7.5" height="15.99" fill="#f0f000"/><rect x="761" y="98.15" width="7.5" height="15.99" fill="#a8f000"/><rect x="761" y="113.84" width="7.5" height="15.99" fill="#50e000"/><rect x="761" y="129.52" width="7.5" height="15.99" fill="#00e000"/><rect x="761" y="145.21" width="7.5" height="15.99" fill="#00e070"/><rect x="761" y="160.90" width="7.5" height="15.99" fill="#00e8b8"/><rect x="761" y="176.59" width="7.5" height="15.99" fill="#00f0f0"/><rect x="761" y="192.27" width="7.5" height="15.99" fill="#00a8f0"/><rect x="761" y="207.96" width="7.5" height="15.99" fill="#0064f0"/><rect x="761" y="223.65" width="7.5" height="15.99" fill="#0010f0"/><rect x="761" y="239.34" width="7.5" height="15.99" fill="#4000f0"/><rect x="761" y="255.02" width="7.5" height="15.99" fill="#8800f0"/><rect x="761" y="270.71" width="7.5" height="15.99" fill="#e000f0"/><g font-family="Liberation Sans" font-style="italic" font-size="8.7" fill="#222" letter-spacing="0"><text x="771" y="38.5">21.861</text><text x="771" y="54.2">20.490</text><text x="771" y="69.9">19.119</text><text x="771" y="85.6">17.748</text><text x="771" y="101.3">16.377</text><text x="771" y="117.0">15.006</text><text x="771" y="132.7">13.635</text><text x="771" y="148.3">12.264</text><text x="771" y="164.0">10.893</text><text x="771" y="179.7">9.522</text><text x="771" y="195.4">8.151</text><text x="771" y="211.1">6.780</text><text x="771" y="226.8">5.409</text><text x="771" y="242.5">4.038</text><text x="771" y="258.2">2.667</text><text x="771" y="273.8">1.296</text><text x="771" y="289.5">-0.075</text></g><text x="768.4" y="26" font-family="Liberation Sans" font-style="italic" font-size="8.7" fill="#222" text-anchor="middle">[%]</text></svg>

<!-- gap strip -->
<div class="a" style="left:6px;top:308px;width:800px;height:3px;background:#d6d6da"></div>

<!-- bottom-left panel -->
<div class="a" style="left:6px;top:311px;width:399px;height:18px;background:#eeeef2"></div>
<div class="a hdr" style="left:9px;top:315.5px">图像 0</div>
<div class="a" style="left:6px;top:329px;width:335px;height:294px;background:#141414"></div>
<div class="a" style="left:10px;top:336px;font-family:'Liberation Mono',monospace;font-weight:bold;font-size:7.5px;color:#22e022;white-space:pre;transform:scaleX(0.898);transform-origin:0 0">Abs Time: 2021,04,26    17:40:47:118:000</div>
<div class="a" style="left:7.5px;top:610px;font-weight:bold;font-size:10px;color:#fff;transform:scaleX(0.8);transform-origin:0 0">0</div>
<svg class="a" style="left:0;top:0" width="814" height="643">
  <defs>
    <filter id="nz" x="0" y="0" width="100%" height="100%">
      <feTurbulence type="fractalNoise" baseFrequency="0.45" numOctaves="3" seed="3" result="n"/>
      <feColorMatrix type="matrix" values="0 0 0 0 0  0 0 0 0 0  0 0 0 0 0  2.2 0 0 0 -0.95" in="n" result="w"/>
      <feComposite in="w" in2="SourceGraphic" operator="in" result="wm"/>
      <feMerge><feMergeNode in="SourceGraphic"/><feMergeNode in="wm"/></feMerge>
    </filter>
    <linearGradient id="lp" x1="0" x2="1" y1="0" y2="0">
      <stop offset="0" stop-color="#5a5a5a"/><stop offset="0.35" stop-color="#424242"/><stop offset="1" stop-color="#343434"/>
    </linearGradient>
    <linearGradient id="lpv" x1="0" x2="0" y1="0" y2="1">
      <stop offset="0" stop-color="#000" stop-opacity="0"/><stop offset="0.4" stop-color="#000" stop-opacity="0.2"/><stop offset="0.75" stop-color="#000" stop-opacity="0.45"/><stop offset="1" stop-color="#000" stop-opacity="0.55"/>
    </linearGradient>
    <linearGradient id="tb" x1="0" x2="1" y1="0" y2="0">
      <stop offset="0" stop-color="#3a3a3a"/><stop offset="0.3" stop-color="#5a5a5a"/><stop offset="0.55" stop-color="#4a4a4a"/><stop offset="1" stop-color="#2c2c2c"/>
    </linearGradient>
    <filter id="nz2" x="0" y="0" width="100%" height="100%">
      <feTurbulence type="fractalNoise" baseFrequency="0.7" numOctaves="2" seed="7" result="n"/>
      <feColorMatrix type="matrix" values="0 0 0 0 0.25  0 0 0 0 0.05  0 0 0 0 0.35  2.0 0 0 0 -0.9" in="n" result="w"/>
      <feComposite in="w" in2="SourceGraphic" operator="in" result="wm"/>
      <feMerge><feMergeNode in="SourceGraphic"/><feMergeNode in="wm"/></feMerge>
    </filter>
    <filter id="bl3" x="-50%" y="-50%" width="200%" height="200%"><feGaussianBlur stdDeviation="6"/></filter>
    <filter id="cb2" filterUnits="userSpaceOnUse" x="140" y="400" width="60" height="120"><feGaussianBlur stdDeviation="0.6"/></filter>
    <linearGradient id="lbe" x1="0" x2="1" y1="0" y2="0"><stop offset="0" stop-color="#fff" stop-opacity="0.6"/><stop offset="0.5" stop-color="#fff" stop-opacity="0.25"/><stop offset="1" stop-color="#fff" stop-opacity="0"/></linearGradient>
    <linearGradient id="lbm" x1="0" x2="0" y1="0" y2="1"><stop offset="0" stop-color="#fff"/><stop offset="0.35" stop-color="#fff"/><stop offset="1" stop-color="#fff" stop-opacity="0"/></linearGradient>
    <mask id="lbmask"><rect x="18.5" y="352.5" width="30" height="200" fill="url(#lbm)"/></mask>
    <clipPath id="spc"><circle cx="167.3" cy="463.7" r="43.5"/></clipPath>
    <clipPath id="phc"><rect x="6" y="352.5" width="335" height="245.5"/></clipPath>
  </defs>
  <g clip-path="url(#phc)">
  <rect x="6" y="352.5" width="335" height="245.5" fill="#040404"/>
  <!-- right pillar -->
  <rect x="261" y="352.5" width="54" height="245.5" fill="#161616"/>
  <rect x="315" y="352.5" width="26" height="245.5" fill="#0a0a0a"/>
  <!-- left pillar -->
  <rect x="18.5" y="352.5" width="58.5" height="245.5" fill="url(#lp)" filter="url(#nz)"/>
  <rect x="18.5" y="352.5" width="58.5" height="245.5" fill="url(#lpv)"/>
  <rect x="18.5" y="352.5" width="30" height="200" fill="url(#lbe)" mask="url(#lbmask)" filter="url(#nz)"/>
  <!-- top band -->
  <rect x="77" y="352.5" width="184" height="37.5" fill="#262626" filter="url(#nz)"/>
  <ellipse cx="120" cy="364" rx="26" ry="11" fill="#b0b0b0" opacity="0.75" filter="url(#bl3)"/>
  <rect x="261" y="352.5" width="80" height="37.5" fill="#1c1c1c"/>
  <path d="M125,371 L261,371 L261,390 L133,390 Z" fill="#2a2a2a"/>
  <path d="M125,371 L133,390" stroke="#121212" stroke-width="1.2"/>
  <!-- interior -->
  <path d="M77.5,390 L160,390 Q165,390 165,396 L165,534 L77.5,534Z" fill="#050505"/>
  <path d="M177,396 Q177,390 183,390 L261,390 L261,534 L177,534Z" fill="#050505"/>
  <path d="M165,396 Q165,390 170,390 L172,390 Q177,390 177,396 L172.5,418 L170.5,418Z" fill="#262626"/>
  <rect x="165" y="418" width="12" height="116" fill="#050505"/>
  <path d="M166,505 L175,505 L174,534 L168,534Z" fill="#1a1a1a"/>
  <!-- rod -->
  <rect x="80" y="462.5" width="182" height="2.5" fill="#161616"/>
  <!-- bottom fixture -->
  <rect x="80.7" y="534" width="180.3" height="43.3" fill="#262626" filter="url(#nz)"/>
  <rect x="80.7" y="533.5" width="180.3" height="5" fill="#363636"/>
  <path d="M136,540 L261,540 L261,560 L131,560 Z" fill="#141414"/><rect x="80.7" y="560" width="180.3" height="17.3" fill="#1e1e1e"/>
  <rect x="77" y="577.3" width="184" height="21" fill="#101010"/>
  </g>
  <!-- specimen -->
  <circle cx="167.3" cy="463.7" r="45.2" fill="#8a8a8a" filter="url(#nz)"/>
  <circle cx="167.3" cy="463.7" r="43.2" fill="#a43ad4" filter="url(#nz2)"/>
  <g clip-path="url(#spc)"><g filter="url(#cb2)">
  <path d="M165.6,419 C165.4,430 165.2,440 166,452 C169,466 171,482 170,506" fill="none" stroke="#3048d8" stroke-width="6.5" pathLength="100" stroke-dasharray="88 200"/><path d="M165.6,419 C165.4,430 165.2,440 166,452 C169,466 171,482 170,506" fill="none" stroke="#3838c8" stroke-width="3.5" pathLength="100" stroke-linecap="round"/>
  <path d="M165.6,419 C165.4,430 165.2,440 166,452 C169,466 171,482 170,506" fill="none" stroke="#20b8b0" stroke-width="4.4" pathLength="100" stroke-dasharray="86 200"/>
  <path d="M165.6,419 C165.4,430 165.2,440 166,452 C169,466 171,482 170,506" fill="none" stroke="#50d040" stroke-width="3" pathLength="100" stroke-dasharray="72 200"/>
  <path d="M165.6,419 C165.4,430 165.2,440 166,452 C169,466 171,482 170,506" fill="none" stroke="#b8b828" stroke-width="3" pathLength="100" stroke-dasharray="26 200"/>
  <path d="M165.6,419 C165.4,430 165.2,440 166,452 C169,466 171,482 170,506" fill="none" stroke="#d85818" stroke-width="2.2" pathLength="100" stroke-dasharray="22 200"/>
  </g></g>
  <circle cx="165.7" cy="443" r="3.3" fill="#20e020" stroke="#10a010" stroke-width="0.6"/>
  <!-- header icons -->
  <g fill="#444" stroke="#444">
    <path d="M371,319 L377.5,319 L374.25,322.5Z" stroke="none"/>
    <path d="M384.5,317.5 L387.5,317.5 L387.5,321 L384.5,321Z M383.5,321 L388.5,321 M386,321 L386,323" fill="none" stroke-width="1"/>
    <path d="M395.2,318.2 L399.8,322.8 M399.8,318.2 L395.2,322.8" fill="none" stroke-width="1.1"/>
  </g>
</svg>
<div class="a" style="left:341px;top:329px;width:64px;height:294px;background:#fff;border-right:1px solid #303030;border-top:1px solid #404040"></div>
<svg class="a" style="left:0;top:0" width="814" height="643"><rect x="345.5" y="350.9" width="17.5" height="250.60000000000002" fill="#fff" stroke="#808080" stroke-width="1"/><line x1="363.0" y1="350.4" x2="363.0" y2="602" stroke="#202020" stroke-width="1"/><line x1="345" y1="366.5" x2="363.5" y2="366.5" stroke="#707070" stroke-width="1"/><line x1="345" y1="382.5" x2="363.5" y2="382.5" stroke="#707070" stroke-width="1"/><line x1="345" y1="398.5" x2="363.5" y2="398.5" stroke="#707070" stroke-width="1"/><line x1="345" y1="413.5" x2="363.5" y2="413.5" stroke="#707070" stroke-width="1"/><line x1="345" y1="429.5" x2="363.5" y2="429.5" stroke="#707070" stroke-width="1"/><line x1="345" y1="445.5" x2="363.5" y2="445.5" stroke="#707070" stroke-width="1"/><line x1="345" y1="460.5" x2="363.5" y2="460.5" stroke="#707070" stroke-width="1"/><line x1="345" y1="476.5" x2="363.5" y2="476.5" stroke="#707070" stroke-width="1"/><line x1="345" y1="492.5" x2="363.5" y2="492.5" stroke="#707070" stroke-width="1"/><line x1="345" y1="508.5" x2="363.5" y2="508.5" stroke="#707070" stroke-width="1"/><line x1="345" y1="523.5" x2="363.5" y2="523.5" stroke="#707070" stroke-width="1"/><line x1="345" y1="539.5" x2="363.5" y2="539.5" stroke="#707070" stroke-width="1"/><line x1="345" y1="555.5" x2="363.5" y2="555.5" stroke="#707070" stroke-width="1"/><line x1="345" y1="571.5" x2="363.5" y2="571.5" stroke="#707070" stroke-width="1"/><line x1="345" y1="586.5" x2="363.5" y2="586.5" stroke="#707070" stroke-width="1"/><path d="M346,601 L351,600.5 L354,599.5 L360.5,599 L361.5,596" fill="none" stroke="#202020" stroke-width="1"/><rect x="366" y="350.40" width="7" height="16.03" fill="#ff2a00"/><rect x="366" y="366.12" width="7" height="16.03" fill="#ff6e00"/><rect x="366" y="381.85" width="7" height="16.03" fill="#ffb400"/><rect x="366" y="397.57" width="7" height="16.03" fill="#f0f000"/><rect x="366" y="413.30" width="7" height="16.03" fill="#a8f000"/><rect x="366" y="429.02" width="7" height="16.03" fill="#50e000"/><rect x="366" y="444.75" width="7" height="16.03" fill="#00e000"/><rect x="366" y="460.48" width="7" height="16.03" fill="#00e070"/><rect x="366" y="476.20" width="7" height="16.03" fill="#00e8b8"/><rect x="366" y="491.92" width="7" height="16.03" fill="#00f0f0"/><rect x="366" y="507.65" width="7" height="16.03" fill="#00a8f0"/><rect x="366" y="523.38" width="7" height="16.03" fill="#0064f0"/><rect x="366" y="539.10" width="7" height="16.03" fill="#0010f0"/><rect x="366" y="554.83" width="7" height="16.03" fill="#4000f0"/><rect x="366" y="570.55" width="7" height="16.03" fill="#8800f0"/><rect x="366" y="586.27" width="7" height="16.03" fill="#e000f0"/><g font-family="Liberation Sans" font-style="italic" font-size="7.6" fill="#222" letter-spacing="0"><text x="378" y="353.1">21.861</text><text x="378" y="368.9">20.490</text><text x="378" y="384.6">19.119</text><text x="378" y="400.3">17.748</text><text x="378" y="416.0">16.377</text><text x="378" y="431.8">15.006</text><text x="378" y="447.5">13.635</text><text x="378" y="463.2">12.264</text><text x="378" y="478.9">10.893</text><text x="378" y="494.7">9.522</text><text x="378" y="510.4">8.151</text><text x="378" y="526.1">6.780</text><text x="378" y="541.8">5.409</text><text x="378" y="557.6">4.038</text><text x="378" y="573.3">2.667</text><text x="378" y="589.0">1.296</text><text x="378" y="604.7">-0.075</text></g><text x="374" y="343" font-family="Liberation Sans" font-style="italic" font-size="7.6" fill="#222" text-anchor="middle">[%]</text></svg>

<!-- divider -->
<div class="a" style="left:405px;top:311px;width:3px;height:312px;background:#dcdce2"></div>

<!-- bottom-right panel -->
<div class="a" style="left:408px;top:311px;width:398px;height:19px;background:#eeeef2"></div>
<div class="a hdr" style="left:410px;top:315.5px">分析曲线</div>
<div class="a" style="left:408px;top:330px;width:398px;height:293px;background:#fff"></div>

<!-- tabs -->
<div class="a" style="left:3px;top:623px;width:811px;height:16px;background:#ececf0"></div>
<div class="a" style="left:6px;top:623px;width:800px;height:1px;background:#f8f8fa"></div>
<div class="a" style="left:6px;top:623px;width:29px;height:16px;background:#fafafc"></div>
<div class="a" style="left:470px;top:623px;width:38px;height:16px;background:#fafafc"></div>
<div class="a tab" style="left:10px;color:#2060b0">图像 0</div>
<div class="a tab" style="left:40px">标志点</div>
<div class="a tab" style="left:412px">图像 1</div>
<div class="a tab" style="left:442px">物体点</div>
<div class="a tab" style="left:474px;color:#2060b0">分析曲线</div>
<div class="a tab" style="left:514px">轨迹</div>
<!-- blue bar -->
<div class="a" style="left:0;top:638px;width:814px;height:1.5px;background:#dceefa"></div>
<div class="a" style="left:0;top:639.5px;width:814px;height:3.5px;background:#0a78d0"></div>

<!-- chart svg -->
<svg class="a" style="left:0;top:0" width="814" height="643">
  <g fill="#444" stroke="#444">
    <path d="M774,319 L780.5,319 L777.25,322.5Z" stroke="none"/>
    <path d="M787.5,317.5 L790.5,317.5 L790.5,321 L787.5,321Z M786.5,321 L791.5,321 M789,321 L789,323" fill="none" stroke-width="1"/>
    <path d="M798.2,318.2 L802.8,322.8 M802.8,318.2 L798.2,322.8" fill="none" stroke-width="1.1"/>
  </g>
  <g stroke="#d8d8d8" stroke-width="1">
    <line x1="454.4" y1="360" x2="702.8" y2="360"/>
    <line x1="454.4" y1="391.1" x2="702.8" y2="391.1"/>
    <line x1="454.4" y1="422.2" x2="702.8" y2="422.2"/>
    <line x1="454.4" y1="453.3" x2="702.8" y2="453.3"/>
    <line x1="454.4" y1="484.4" x2="702.8" y2="484.4"/>
    <line x1="454.4" y1="515.5" x2="702.8" y2="515.5"/>
    <line x1="454.4" y1="577.7" x2="702.8" y2="577.7"/>
    <line x1="495.8" y1="360" x2="495.8" y2="577.7"/>
    <line x1="537.2" y1="360" x2="537.2" y2="577.7"/>
    <line x1="578.6" y1="360" x2="578.6" y2="577.7"/>
    <line x1="620" y1="360" x2="620" y2="577.7"/>
    <line x1="661.4" y1="360" x2="661.4" y2="577.7"/>
    <line x1="702.8" y1="360" x2="702.8" y2="577.7"/>
  </g>
  <line x1="454.4" y1="360" x2="454.4" y2="577.7" stroke="#404040" stroke-width="1"/>
  <line x1="454.4" y1="546.6" x2="702.8" y2="546.6" stroke="#404040" stroke-width="1"/>
  <line x1="649" y1="360" x2="649" y2="577.7" stroke="#e02020" stroke-width="2" stroke-dasharray="4,4"/>
  <polyline fill="none" stroke="#60d060" stroke-width="1" points="454.4,546.6 458.5,546.6 462.7,546.6 466.8,546.6 471.0,546.6 475.1,546.6 479.2,546.6 483.4,546.6 487.5,546.6 491.7,546.6 495.8,546.6 499.9,546.6 504.1,546.6 508.2,546.6 512.4,546.6 516.5,546.6 520.6,546.6 524.8,546.6 528.9,546.6 533.1,546.6 537.2,546.6 541.3,546.6 545.5,546.6 549.6,546.6 553.8,546.6 557.9,546.6 562.0,546.6 566.2,546.6 570.3,546.6 574.5,546.6 578.6,546.6 582.7,546.6 586.9,546.6 591.0,546.6 595.2,546.6 599.3,546.6 603.4,546.6 607.6,546.6 611.7,546.6 613.4,546.0 615.0,544.1 615.9,541.6 616.7,532.9 617.1,528.6 618.3,519.9 619.6,513.7 620.0,507.5 620.8,497.5 621.7,468.9 622.1,457.7 623.3,455.0 624.7,452.4 626.1,450.1 627.5,447.9 628.9,445.8 630.3,443.8 631.8,441.8 633.2,439.9 634.6,438.0 636.0,436.1 637.4,434.2 638.8,432.4 640.2,430.6 641.6,428.8 643.0,427.1 644.4,425.3 645.8,423.6 647.2,421.9 649.0,414.7 650.3,411.6 651.6,408.5 653.0,405.6 654.3,402.9 655.6,400.5 656.9,398.4 658.3,396.6 659.6,395.3 660.9,394.3 662.2,393.8 664.3,393.5 666.0,393.1 667.6,392.7 669.3,392.3 670.9,392.0 672.6,391.6 674.2,391.2 675.9,391.2 677.5,391.2 679.2,391.2"/>
  <g fill="#8ea2ea" stroke="#4464cc" stroke-width="0.9"><circle cx="454.4" cy="546.6" r="2.5"/><circle cx="458.5" cy="546.6" r="2.5"/><circle cx="462.7" cy="546.6" r="2.5"/><circle cx="466.8" cy="546.6" r="2.5"/><circle cx="471.0" cy="546.6" r="2.5"/><circle cx="475.1" cy="546.6" r="2.5"/><circle cx="479.2" cy="546.6" r="2.5"/><circle cx="483.4" cy="546.6" r="2.5"/><circle cx="487.5" cy="546.6" r="2.5"/><circle cx="491.7" cy="546.6" r="2.5"/><circle cx="495.8" cy="546.6" r="2.5"/><circle cx="499.9" cy="546.6" r="2.5"/><circle cx="504.1" cy="546.6" r="2.5"/><circle cx="508.2" cy="546.6" r="2.5"/><circle cx="512.4" cy="546.6" r="2.5"/><circle cx="516.5" cy="546.6" r="2.5"/><circle cx="520.6" cy="546.6" r="2.5"/><circle cx="524.8" cy="546.6" r="2.5"/><circle cx="528.9" cy="546.6" r="2.5"/><circle cx="533.1" cy="546.6" r="2.5"/><circle cx="537.2" cy="546.6" r="2.5"/><circle cx="541.3" cy="546.6" r="2.5"/><circle cx="545.5" cy="546.6" r="2.5"/><circle cx="549.6" cy="546.6" r="2.5"/><circle cx="553.8" cy="546.6" r="2.5"/><circle cx="557.9" cy="546.6" r="2.5"/><circle cx="562.0" cy="546.6" r="2.5"/><circle cx="566.2" cy="546.6" r="2.5"/><circle cx="570.3" cy="546.6" r="2.5"/><circle cx="574.5" cy="546.6" r="2.5"/><circle cx="578.6" cy="546.6" r="2.5"/><circle cx="582.7" cy="546.6" r="2.5"/><circle cx="586.9" cy="546.6" r="2.5"/><circle cx="591.0" cy="546.6" r="2.5"/><circle cx="595.2" cy="546.6" r="2.5"/><circle cx="599.3" cy="546.6" r="2.5"/><circle cx="603.4" cy="546.6" r="2.5"/><circle cx="607.6" cy="546.6" r="2.5"/><circle cx="611.7" cy="546.6" r="2.5"/><circle cx="613.4" cy="546.0" r="2.5"/><circle cx="615.0" cy="544.1" r="2.5"/><circle cx="615.9" cy="541.6" r="2.5"/><circle cx="616.7" cy="532.9" r="2.5"/><circle cx="617.1" cy="528.6" r="2.5"/><circle cx="618.3" cy="519.9" r="2.5"/><circle cx="619.6" cy="513.7" r="2.5"/><circle cx="620.0" cy="507.5" r="2.5"/><circle cx="620.8" cy="497.5" r="2.5"/><circle cx="621.7" cy="468.9" r="2.5"/><circle cx="622.1" cy="457.7" r="2.5"/><circle cx="623.3" cy="455.0" r="2.5"/><circle cx="624.7" cy="452.4" r="2.5"/><circle cx="626.1" cy="450.1" r="2.5"/><circle cx="627.5" cy="447.9" r="2.5"/><circle cx="628.9" cy="445.8" r="2.5"/><circle cx="630.3" cy="443.8" r="2.5"/><circle cx="631.8" cy="441.8" r="2.5"/><circle cx="633.2" cy="439.9" r="2.5"/><circle cx="634.6" cy="438.0" r="2.5"/><circle cx="636.0" cy="436.1" r="2.5"/><circle cx="637.4" cy="434.2" r="2.5"/><circle cx="638.8" cy="432.4" r="2.5"/><circle cx="640.2" cy="430.6" r="2.5"/><circle cx="641.6" cy="428.8" r="2.5"/><circle cx="643.0" cy="427.1" r="2.5"/><circle cx="644.4" cy="425.3" r="2.5"/><circle cx="645.8" cy="423.6" r="2.5"/><circle cx="647.2" cy="421.9" r="2.5"/><circle cx="649.0" cy="414.7" r="2.5"/><circle cx="650.3" cy="411.6" r="2.5"/><circle cx="651.6" cy="408.5" r="2.5"/><circle cx="653.0" cy="405.6" r="2.5"/><circle cx="654.3" cy="402.9" r="2.5"/><circle cx="655.6" cy="400.5" r="2.5"/><circle cx="656.9" cy="398.4" r="2.5"/><circle cx="658.3" cy="396.6" r="2.5"/><circle cx="659.6" cy="395.3" r="2.5"/><circle cx="660.9" cy="394.3" r="2.5"/><circle cx="662.2" cy="393.8" r="2.5"/><circle cx="664.3" cy="393.5" r="2.5"/><circle cx="666.0" cy="393.1" r="2.5"/><circle cx="667.6" cy="392.7" r="2.5"/><circle cx="669.3" cy="392.3" r="2.5"/><circle cx="670.9" cy="392.0" r="2.5"/><circle cx="672.6" cy="391.6" r="2.5"/><circle cx="674.2" cy="391.2" r="2.5"/><circle cx="675.9" cy="391.2" r="2.5"/><circle cx="677.5" cy="391.2" r="2.5"/><circle cx="679.2" cy="391.2" r="2.5"/></g>
  <g stroke="#404040" stroke-width="1"><line x1="449" y1="360" x2="454" y2="360"/><line x1="449" y1="391.1" x2="454" y2="391.1"/><line x1="449" y1="422.2" x2="454" y2="422.2"/><line x1="449" y1="453.3" x2="454" y2="453.3"/><line x1="449" y1="484.4" x2="454" y2="484.4"/><line x1="449" y1="515.5" x2="454" y2="515.5"/><line x1="449" y1="546.6" x2="454" y2="546.6"/><line x1="449" y1="577.7" x2="454" y2="577.7"/>
  <line x1="495.8" y1="542" x2="495.8" y2="546.6"/><line x1="537.2" y1="542" x2="537.2" y2="546.6"/><line x1="578.6" y1="542" x2="578.6" y2="546.6"/><line x1="620" y1="542" x2="620" y2="546.6"/><line x1="661.4" y1="542" x2="661.4" y2="546.6"/><line x1="702.8" y1="542" x2="702.8" y2="551"/></g>
  <g font-family="Liberation Sans" font-size="9.6" fill="#333" text-anchor="end">
    <text x="448" y="364">30</text><text x="448" y="395">25</text><text x="448" y="426">20</text>
    <text x="448" y="457">15</text><text x="448" y="488">10</text><text x="448" y="519">5</text>
    <text x="448" y="550">0</text><text x="448" y="581">-5</text>
  </g>
  <g font-family="Liberation Sans" font-size="9.6" fill="#333" text-anchor="middle">
    <text x="454.4" y="564">0</text><text x="495.8" y="564">50</text><text x="537.2" y="564">100</text>
    <text x="578.6" y="564">150</text><text x="620" y="564">200</text><text x="661.4" y="564">250</text><text x="702.8" y="564">300</text>
    <text x="578.3" y="613.5" font-size="9">Stage</text>
    <text x="607.5" y="345.5" font-size="8.3">POINT POSITION</text>
  </g>
  <text x="0" y="0" font-family="Liberation Sans" font-size="9" fill="#333" text-anchor="middle" transform="translate(426,468) rotate(-90)">Major Strain Te[%]</text>
  <rect x="711.5" y="356.5" width="90" height="24" fill="#fdfdfd" stroke="#e6e6e6"/>
  <line x1="718" y1="368.5" x2="738" y2="368.5" stroke="#60d060"/>
  <circle cx="728" cy="368.5" r="2.4" fill="#8ea2ea" stroke="#4464cc" stroke-width="0.9"/>
  <text x="741" y="370.5" font-family="Liberation Sans" font-size="7.6" fill="#222">Point Position 2</text>
</svg>
</body></html>
